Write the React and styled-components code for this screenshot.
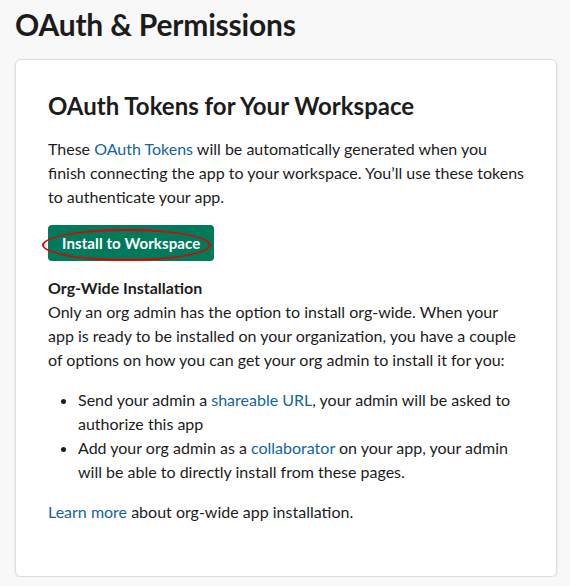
import React from "react";
import styled, { createGlobalStyle } from "styled-components";

const GlobalStyle = createGlobalStyle`
  html, body {
    margin: 0;
    padding: 0;
    background: #f8f8f8;
    font-family: Lato, "Open Sans", sans-serif;
    color: #1d1c1d;
  }
`;

const Page = styled.div`
  padding: 0 13px 0 15px;
`;

const PageTitle = styled.h1`
  margin: 0;
  padding-top: 4px;
  height: 55px;
  font-size: 30px;
  line-height: 40px;
  font-weight: 700;
  letter-spacing: -0.2px;
`;

const Card = styled.div`
  background: #fff;
  border: 1px solid #dddddd;
  border-radius: 6px;
  box-shadow: 0 1px 3px rgba(0, 0, 0, 0.08);
  padding: 30px 30px 52px 32px;
`;

const CardTitle = styled.h2`
  margin: 0 0 15px;
  font-size: 24px;
  line-height: 32px;
  font-weight: 700;
`;

const Text = styled.p`
  margin: 0;
  font-size: 16px;
  line-height: 24px;
`;

const Link = styled.a`
  color: #1264a3;
  text-decoration: none;
`;

const ButtonWrap = styled.div`
  position: relative;
  display: inline-block;
  margin: 16px 0 15px;
`;

const Button = styled.button`
  display: block;
  height: 36px;
  padding: 0 14px;
  border: none;
  border-radius: 4px;
  background: #007a5a;
  color: #fff;
  font-family: Lato, "Open Sans", sans-serif;
  font-size: 15px;
  font-weight: 700;
  letter-spacing: 0.1px;
`;

const Marker = styled.span`
  position: absolute;
  left: -6px;
  top: 4px;
  width: 169px;
  height: 32px;
  border: 2px solid #e00000;
  border-radius: 50%;
  box-sizing: border-box;
  pointer-events: none;
`;

const SubTitle = styled.div`
  font-size: 16px;
  line-height: 24px;
  font-weight: 700;
`;

const List = styled.ul`
  margin: 16px 0 16px;
  padding-left: 30px;
  font-size: 16px;
  line-height: 24px;
`;

export default function App() {
  return (
    <Page>
      <GlobalStyle />
      <PageTitle>OAuth &amp; Permissions</PageTitle>
      <Card>
        <CardTitle>OAuth Tokens for Your Workspace</CardTitle>
        <Text>
          These <Link href="#">OAuth Tokens</Link> will be automatically generated when you
          finish connecting the app to your workspace. You’ll use these tokens to
          authenticate your app.
        </Text>
        <ButtonWrap>
          <Button>Install to Workspace</Button>
          <Marker />
        </ButtonWrap>
        <SubTitle>Org-Wide Installation</SubTitle>
        <Text>
          Only an org admin has the option to install org-wide. When your app is ready to
          be installed on your organization, you have a couple of options on how you can
          get your org admin to install it for you:
        </Text>
        <List>
          <li>
            Send your admin a <Link href="#">shareable URL</Link>, your admin will be asked
            to authorize this app
          </li>
          <li>
            Add your org admin as a <Link href="#">collaborator</Link> on your app, your
            admin will be able to directly install from these pages.
          </li>
        </List>
        <Text>
          <Link href="#">Learn more</Link> about org-wide app installation.
        </Text>
      </Card>
    </Page>
  );
}
